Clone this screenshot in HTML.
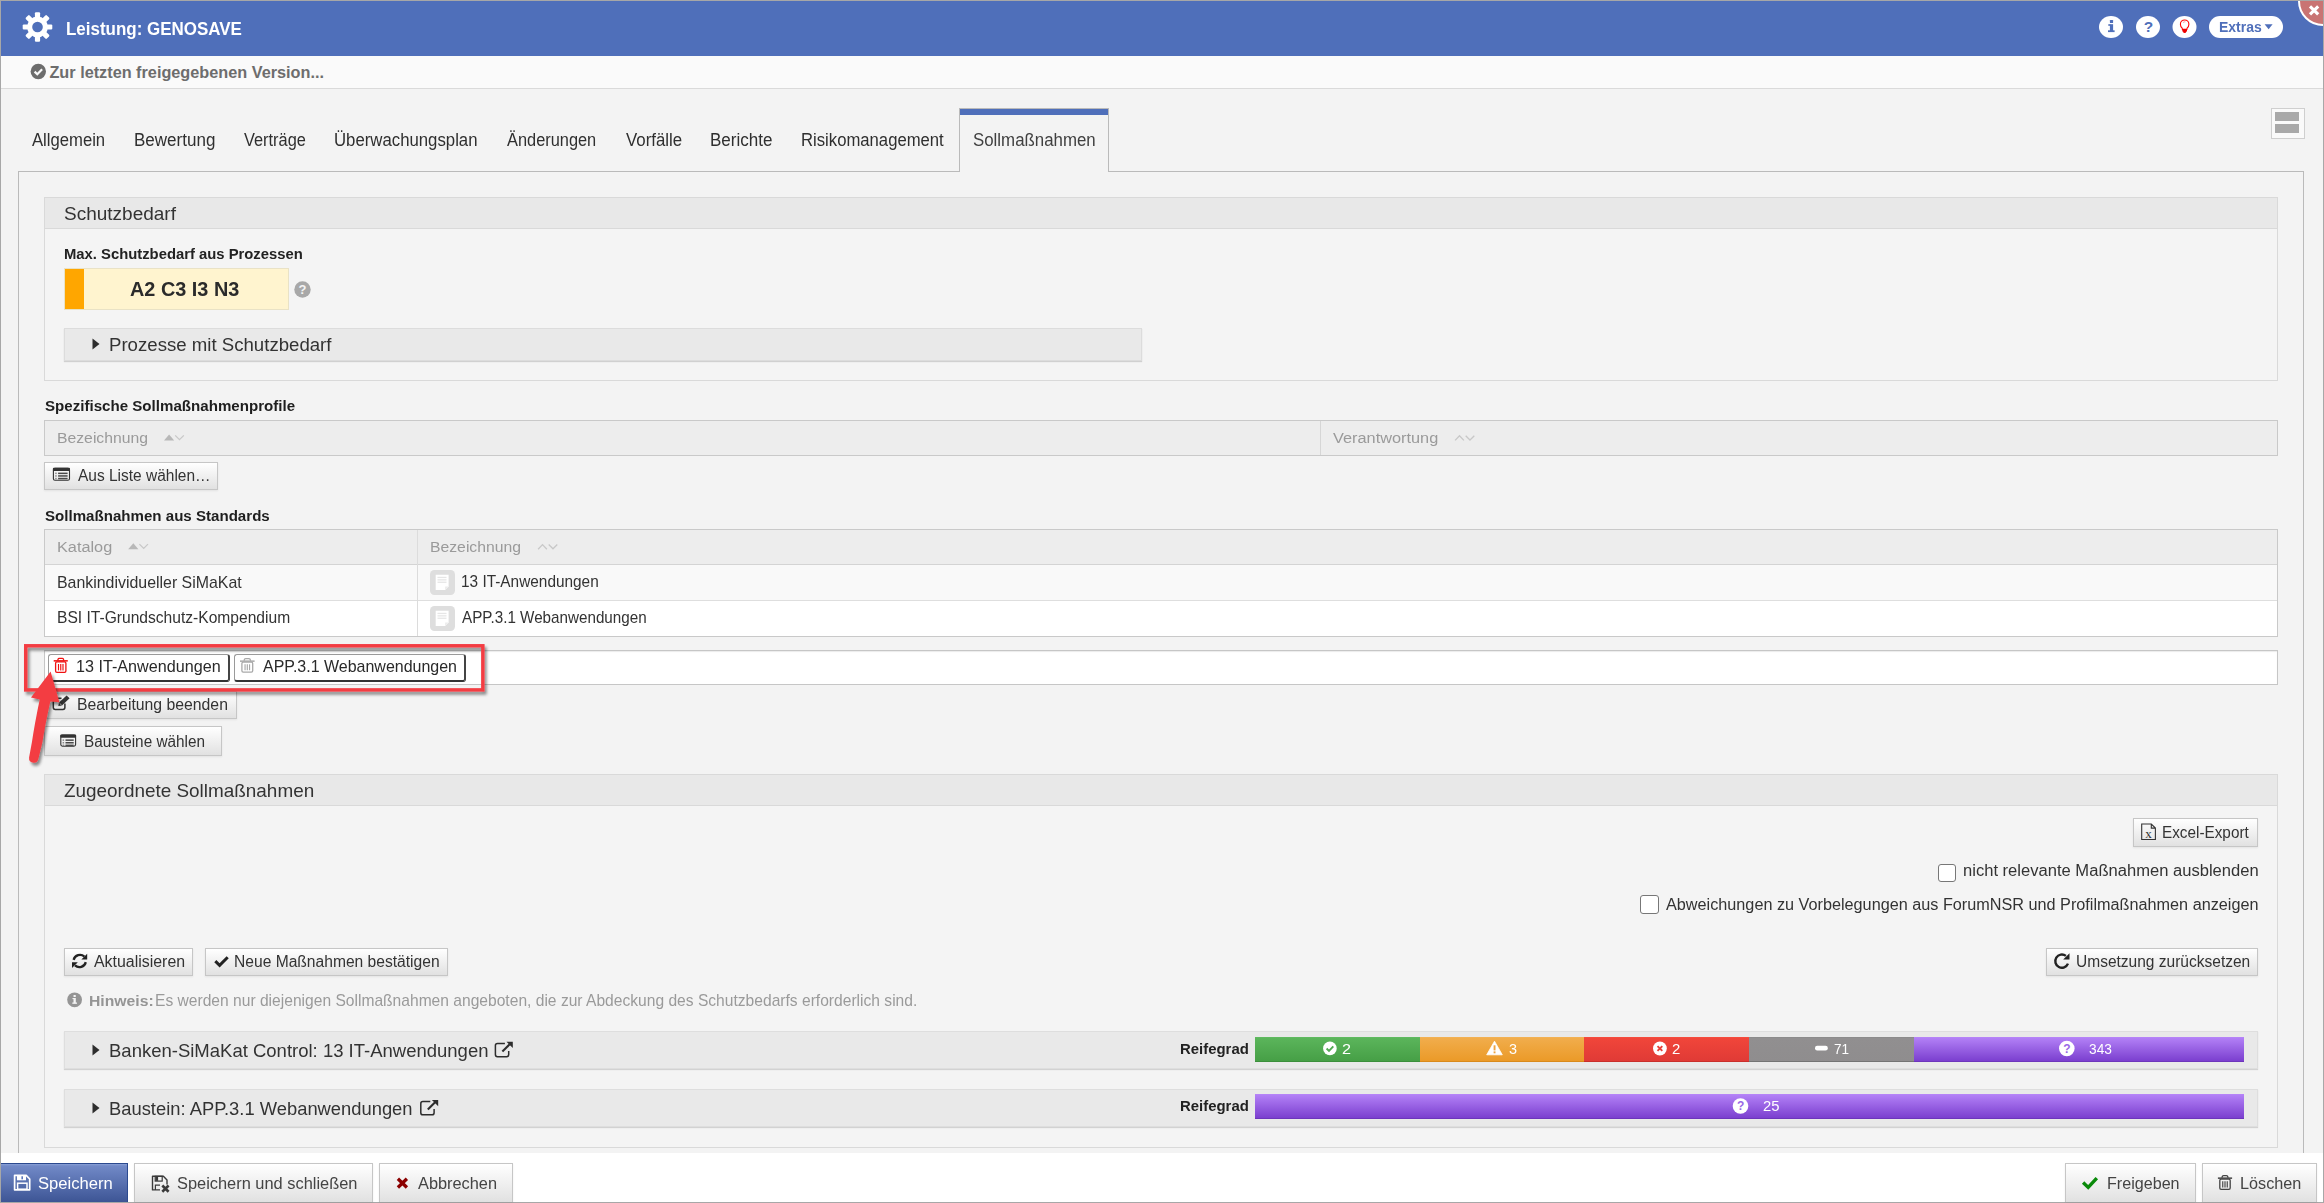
<!DOCTYPE html>
<html><head><meta charset="utf-8"><title>Leistung: GENOSAVE</title>
<style>
html,body{margin:0;padding:0;}
body{width:2324px;height:1203px;overflow:hidden;background:#a7a7a7;font-family:"Liberation Sans", sans-serif;position:relative;}
</style></head><body>
<div style="position:absolute;left:1px;top:1px;width:2322px;height:1201px;background:#f3f3f3;"></div><div style="position:absolute;left:1px;top:1px;width:2322px;height:55px;background:#4f6fba;"></div><div style="position:absolute;left:1px;top:56px;width:2322px;height:32px;background:#fafafa;"></div><div style="position:absolute;left:1px;top:88px;width:2322px;height:1px;background:#dadada;"></div><div style="position:absolute;left:18px;top:171px;width:2286px;height:982px;box-sizing:border-box;border:1px solid #bababa;border-bottom:none;background:#f3f3f3;"></div><div style="position:absolute;left:959px;top:108px;width:150px;height:64px;box-sizing:border-box;border:1px solid #bababa;border-bottom:none;background:#f3f3f3;"></div><div style="position:absolute;left:960px;top:109px;width:148px;height:6px;background:#4f6fba;"></div><div style="position:absolute;left:2271px;top:108px;width:34px;height:31px;box-sizing:border-box;border:1px solid #cfcfcf;background:#fafafa;"></div><div style="position:absolute;left:2275px;top:112px;width:24px;height:9px;background:#a9a9a9;"></div><div style="position:absolute;left:2275px;top:124px;width:24px;height:9px;background:#a9a9a9;"></div><div style="position:absolute;left:1px;top:1153px;width:2322px;height:49px;background:#ffffff;"></div><div style="position:absolute;left:44px;top:197px;width:2234px;height:184px;box-sizing:border-box;border:1px solid #d9d9d9;background:#f4f4f4;"></div><div style="position:absolute;left:45px;top:198px;width:2232px;height:30px;background:#e8e8e8;"></div><div style="position:absolute;left:45px;top:228px;width:2232px;height:1px;background:#d9d9d9;"></div><div style="position:absolute;left:64px;top:268px;width:225px;height:42px;box-sizing:border-box;border:1px solid #e9e2c6;background:#fff4cf;"></div><div style="position:absolute;left:65px;top:269px;width:19px;height:40px;background:#ffa600;"></div><svg style="position:absolute;left:294px;top:281px;" width="17" height="17" viewBox="0 0 17 17"><circle cx="8.5" cy="8.5" r="8.2" fill="#a8a8a8"/><text x="8.5" y="13.4" font-family="Liberation Sans" font-weight="700" font-size="13" fill="#f4f4f4" text-anchor="middle">?</text></svg><div style="position:absolute;left:64px;top:328px;width:1078px;height:33px;box-sizing:border-box;border:1px solid #dcdcdc;background:#e9e9e9;box-shadow:0 1px 1px #d0d0d0;"></div><svg style="position:absolute;left:92px;top:338px;" width="8" height="12" viewBox="0 0 8 12"><path d="M0.5 0.5 L7.5 6 L0.5 11.5 Z" fill="#2d2d2d"/></svg><div style="position:absolute;left:44px;top:420px;width:2234px;height:36px;box-sizing:border-box;border:1px solid #c9c9c9;background:#ededed;"></div><div style="position:absolute;left:1320px;top:421px;width:1px;height:34px;background:#d6d6d6;"></div><div style="position:absolute;left:44px;top:462px;width:174px;height:28px;box-sizing:border-box;border:1px solid #c6c6c6;background:linear-gradient(#ffffff,#e1e1e1);box-shadow:0 1px 2px rgba(0,0,0,0.07);"></div><div style="position:absolute;left:44px;top:529px;width:2234px;height:108px;box-sizing:border-box;border:1px solid #c9c9c9;background:#fff;"></div><div style="position:absolute;left:45px;top:530px;width:2232px;height:34px;background:#ededed;"></div><div style="position:absolute;left:45px;top:564px;width:2232px;height:1px;background:#d4d4d4;"></div><div style="position:absolute;left:45px;top:565px;width:2232px;height:35px;background:#f9f9f9;"></div><div style="position:absolute;left:45px;top:600px;width:2232px;height:1px;background:#dedede;"></div><div style="position:absolute;left:417px;top:530px;width:1px;height:106px;background:#dcdcdc;"></div><div style="position:absolute;left:44px;top:650px;width:2234px;height:35px;box-sizing:border-box;border:1px solid #c6c6c6;background:#fff;box-shadow:inset 0 1px 1px rgba(0,0,0,0.08);"></div><div style="position:absolute;left:48px;top:654px;width:182px;height:28px;box-sizing:border-box;border:1px solid #9a9a9a;border-right:2px solid #444;border-bottom:2px solid #333;border-radius:3px;background:#fff;"></div><div style="position:absolute;left:234px;top:654px;width:232px;height:28px;box-sizing:border-box;border:1px solid #9a9a9a;border-right:2px solid #444;border-bottom:2px solid #333;border-radius:3px;background:#fff;"></div><div style="position:absolute;left:44px;top:691px;width:193px;height:28px;box-sizing:border-box;border:1px solid #c6c6c6;background:linear-gradient(#ffffff,#e1e1e1);box-shadow:0 1px 2px rgba(0,0,0,0.07);"></div><div style="position:absolute;left:44px;top:726px;width:178px;height:30px;box-sizing:border-box;border:1px solid #c6c6c6;background:linear-gradient(#ffffff,#e1e1e1);box-shadow:0 1px 2px rgba(0,0,0,0.07);"></div><div style="position:absolute;left:44px;top:774px;width:2234px;height:374px;box-sizing:border-box;border:1px solid #d9d9d9;background:#f4f4f4;"></div><div style="position:absolute;left:45px;top:775px;width:2232px;height:30px;background:#e8e8e8;"></div><div style="position:absolute;left:45px;top:805px;width:2232px;height:1px;background:#d9d9d9;"></div><div style="position:absolute;left:2133px;top:818px;width:125px;height:29px;box-sizing:border-box;border:1px solid #c6c6c6;background:linear-gradient(#ffffff,#e1e1e1);box-shadow:0 1px 2px rgba(0,0,0,0.07);"></div><div style="position:absolute;left:1938px;top:864px;width:18px;height:18px;box-sizing:border-box;border:1px solid #777;border-radius:3px;background:#fff;"></div><div style="position:absolute;left:1640px;top:895px;width:19px;height:19px;box-sizing:border-box;border:1px solid #777;border-radius:3px;background:#fff;"></div><div style="position:absolute;left:64px;top:948px;width:129px;height:28px;box-sizing:border-box;border:1px solid #c6c6c6;background:linear-gradient(#ffffff,#e1e1e1);box-shadow:0 1px 2px rgba(0,0,0,0.07);"></div><div style="position:absolute;left:205px;top:948px;width:243px;height:28px;box-sizing:border-box;border:1px solid #c6c6c6;background:linear-gradient(#ffffff,#e1e1e1);box-shadow:0 1px 2px rgba(0,0,0,0.07);"></div><div style="position:absolute;left:2046px;top:948px;width:212px;height:28px;box-sizing:border-box;border:1px solid #c6c6c6;background:linear-gradient(#ffffff,#e1e1e1);box-shadow:0 1px 2px rgba(0,0,0,0.07);"></div><div style="position:absolute;left:64px;top:1031px;width:2194px;height:38px;box-sizing:border-box;border:1px solid #dedede;background:#e9e9e9;box-shadow:0 1px 1px #d2d2d2;"></div><div style="position:absolute;left:64px;top:1089px;width:2194px;height:38px;box-sizing:border-box;border:1px solid #dedede;background:#e9e9e9;box-shadow:0 1px 1px #d2d2d2;"></div><svg style="position:absolute;left:92px;top:1044px;" width="8" height="12" viewBox="0 0 8 12"><path d="M0.5 0.5 L7.5 6 L0.5 11.5 Z" fill="#2d2d2d"/></svg><svg style="position:absolute;left:92px;top:1102px;" width="8" height="12" viewBox="0 0 8 12"><path d="M0.5 0.5 L7.5 6 L0.5 11.5 Z" fill="#2d2d2d"/></svg><div style="position:absolute;left:1255px;top:1037px;width:165px;height:25px;background:linear-gradient(#63bd63 0px,#5bb55b 1px,#469f46 24px,#3c8f3c 24px);"></div><div style="position:absolute;left:1420px;top:1037px;width:164px;height:25px;background:linear-gradient(#f3b459 0px,#f1ad4c 1px,#eb9a28 24px,#d98a1c 24px);"></div><div style="position:absolute;left:1584px;top:1037px;width:165px;height:25px;background:linear-gradient(#f8503f 0px,#f1463a 1px,#e03a36 24px,#c92f2c 24px);"></div><div style="position:absolute;left:1749px;top:1037px;width:165px;height:25px;background:linear-gradient(#868686 0px,#918f90 1px,#8f8d8e 24px,#747474 24px);"></div><div style="position:absolute;left:1914px;top:1037px;width:330px;height:25px;background:linear-gradient(#b887f8 0px,#b280f6 1px,#7b3fcf 24px,#6d35bb 24px);"></div><div style="position:absolute;left:1255px;top:1094px;width:989px;height:25px;background:linear-gradient(#b887f8 0px,#b280f6 1px,#7b3fcf 24px,#6d35bb 24px);"></div><div style="position:absolute;left:1px;top:1163px;width:127px;height:39px;box-sizing:border-box;border:1px solid #2c4a8f;border-left:none;border-bottom:none;background:linear-gradient(#8aa0d6 0px,#7189c7 2px,#3d5595 38px);"></div><div style="position:absolute;left:134px;top:1163px;width:239px;height:39px;box-sizing:border-box;border:1px solid #c6c6c6;background:linear-gradient(#ffffff,#e1e1e1);box-shadow:0 1px 2px rgba(0,0,0,0.07);border-bottom:none;"></div><div style="position:absolute;left:379px;top:1163px;width:134px;height:39px;box-sizing:border-box;border:1px solid #c6c6c6;background:linear-gradient(#ffffff,#e1e1e1);box-shadow:0 1px 2px rgba(0,0,0,0.07);border-bottom:none;"></div><div style="position:absolute;left:2065px;top:1163px;width:131px;height:39px;box-sizing:border-box;border:1px solid #c6c6c6;background:linear-gradient(#ffffff,#e1e1e1);box-shadow:0 1px 2px rgba(0,0,0,0.07);border-bottom:none;"></div><div style="position:absolute;left:2202px;top:1163px;width:115px;height:39px;box-sizing:border-box;border:1px solid #c6c6c6;background:linear-gradient(#ffffff,#e1e1e1);box-shadow:0 1px 2px rgba(0,0,0,0.07);border-bottom:none;"></div><svg style="position:absolute;left:0;top:0" width="2324" height="1203" viewBox="0 0 2324 1203"><g transform="translate(37.5,27)" fill="#fff"><circle r="10.4"/><rect x="-2.6" y="-14.8" width="5.2" height="6.5" rx="1.1" transform="rotate(0)"/><rect x="-2.6" y="-14.8" width="5.2" height="6.5" rx="1.1" transform="rotate(45)"/><rect x="-2.6" y="-14.8" width="5.2" height="6.5" rx="1.1" transform="rotate(90)"/><rect x="-2.6" y="-14.8" width="5.2" height="6.5" rx="1.1" transform="rotate(135)"/><rect x="-2.6" y="-14.8" width="5.2" height="6.5" rx="1.1" transform="rotate(180)"/><rect x="-2.6" y="-14.8" width="5.2" height="6.5" rx="1.1" transform="rotate(225)"/><rect x="-2.6" y="-14.8" width="5.2" height="6.5" rx="1.1" transform="rotate(270)"/><rect x="-2.6" y="-14.8" width="5.2" height="6.5" rx="1.1" transform="rotate(315)"/><circle r="5.3" fill="#4f6fba"/></g><circle cx="38.3" cy="71.5" r="7.7" fill="#6d6d6d"/><path d="M34.6 71.6 L37.3 74.3 L42.1 69.3" fill="none" stroke="#fafafa" stroke-width="2.2"/><ellipse cx="2111" cy="27" rx="12" ry="11" fill="#fff"/><ellipse cx="2148" cy="27" rx="12" ry="11" fill="#fff"/><ellipse cx="2184.5" cy="27" rx="12" ry="11" fill="#fff"/><g fill="#4f6fba"><rect x="2109.9" y="20" width="3.2" height="3" rx="0.6"/><rect x="2109.9" y="24.2" width="3.2" height="7.8"/><rect x="2108.3" y="24.2" width="2.2" height="1.6"/><rect x="2108" y="30.3" width="6.6" height="1.8"/></g><text x="2148.4" y="32.4" font-family="Liberation Sans" font-weight="700" font-size="15.5" fill="#4f6fba" text-anchor="middle">?</text><path d="M2182.2 28.2 Q2180.4 26.4 2180.4 24.2 A4.25 4.25 0 1 1 2188.9 24.2 Q2188.9 26.4 2187.1 28.2 L2186.9 29.4 H2182.4 Z" fill="#fff" stroke="#f00" stroke-width="1.1"/><rect x="2182.3" y="29.3" width="4.7" height="2.2" fill="#e00"/><circle cx="2184.65" cy="31.4" r="1.6" fill="#e00"/><path d="M2183 22.6 Q2184 21.6 2185.4 21.8" stroke="#f66" stroke-width="0.7" fill="none"/><rect x="2209" y="16" width="74" height="22" rx="11" fill="#fff"/><path d="M2264.6 24.3 H2272.6 L2268.6 29.2 Z" fill="#4f6fba"/><path d="M164 440.5 L169.1 434.5 L174.2 440.5 Z" fill="#b8b8b8"/><path d="M175.2 435.4 L179.5 439.7 L183.8 435.4" fill="none" stroke="#c8c8c8" stroke-width="1.3"/><path d="M128.2 549.2 L133.29999999999998 543.2 L138.39999999999998 549.2 Z" fill="#b8b8b8"/><path d="M139.39999999999998 544.1 L143.7 548.4000000000001 L148.0 544.1" fill="none" stroke="#c8c8c8" stroke-width="1.3"/><path d="M538.1 549.2 L542.5 544.6 L546.9 549.2" fill="none" stroke="#c8c8c8" stroke-width="1.3"/><path d="M548.7 544.5 L553.0 548.8000000000001 L557.3 544.5" fill="none" stroke="#c8c8c8" stroke-width="1.3"/><path d="M1455.1 440.40000000000003 L1459.5 435.8 L1463.9 440.40000000000003" fill="none" stroke="#c8c8c8" stroke-width="1.3"/><path d="M1465.7 435.7 L1470.0 440.0 L1474.3 435.7" fill="none" stroke="#c8c8c8" stroke-width="1.3"/><rect x="53.4" y="468.2" width="16.1" height="12.1" rx="1.6" fill="none" stroke="#333" stroke-width="1.1"/><rect x="52.9" y="467.7" width="17.1" height="3.2" rx="1" fill="#333"/><rect x="55.199999999999996" y="472.59999999999997" width="1.5" height="1.5" fill="#888"/><rect x="58.1" y="472.59999999999997" width="9.500000000000002" height="1.5" fill="#4a4a4a"/><rect x="55.199999999999996" y="475.2" width="1.5" height="1.5" fill="#888"/><rect x="58.1" y="475.2" width="9.500000000000002" height="1.5" fill="#4a4a4a"/><rect x="55.199999999999996" y="477.79999999999995" width="1.5" height="1.5" fill="#888"/><rect x="58.1" y="477.79999999999995" width="9.500000000000002" height="1.5" fill="#4a4a4a"/><rect x="60.8" y="735.0" width="14.8" height="11.2" rx="1.6" fill="none" stroke="#333" stroke-width="1.1"/><rect x="60.3" y="734.5" width="15.8" height="3.2" rx="1" fill="#333"/><rect x="62.599999999999994" y="739.4" width="1.5" height="1.5" fill="#888"/><rect x="65.5" y="739.4" width="8.200000000000001" height="1.5" fill="#4a4a4a"/><rect x="62.599999999999994" y="742.0" width="1.5" height="1.5" fill="#888"/><rect x="65.5" y="742.0" width="8.200000000000001" height="1.5" fill="#4a4a4a"/><rect x="62.599999999999994" y="744.6" width="1.5" height="1.5" fill="#888"/><rect x="65.5" y="744.6" width="8.200000000000001" height="1.5" fill="#4a4a4a"/><rect x="430" y="570" width="25" height="25" rx="4.5" fill="#dedede"/><path d="M435.7 574.8 H448.6 V586.4 L445.1 589.9 H435.7 Z" fill="#fff"/><path d="M445.1 589.9 V586.4 H448.6 Z" fill="#ececec"/><rect x="437.5" y="576.8" width="9" height="1.3" fill="#e6e6e6"/><rect x="437.5" y="579.1999999999999" width="9" height="1.3" fill="#e6e6e6"/><rect x="437.5" y="581.5999999999999" width="9" height="1.3" fill="#e6e6e6"/><rect x="430" y="606" width="25" height="25" rx="4.5" fill="#dedede"/><path d="M435.7 610.8 H448.6 V622.4 L445.1 625.9 H435.7 Z" fill="#fff"/><path d="M445.1 625.9 V622.4 H448.6 Z" fill="#ececec"/><rect x="437.5" y="612.8" width="9" height="1.3" fill="#e6e6e6"/><rect x="437.5" y="615.1999999999999" width="9" height="1.3" fill="#e6e6e6"/><rect x="437.5" y="617.5999999999999" width="9" height="1.3" fill="#e6e6e6"/><g fill="none" stroke="#f01010" stroke-width="1.3"><rect x="55.6" y="661.9000000000001" width="10.3" height="10.4" rx="1.3"/><path d="M57.6 660.4000000000001 L58.400000000000006 658.6 Q58.7 658.35 59.300000000000004 658.35 H62.199999999999996 Q62.8 658.35 63.099999999999994 658.6 L63.9 660.4000000000001"/></g><rect x="53.7" y="660.1" width="14.1" height="1.5" fill="#f01010"/><line x1="58.5" y1="664.0" x2="58.5" y2="670.4" stroke="#f01010" stroke-width="1.15"/><line x1="60.75" y1="664.0" x2="60.75" y2="670.4" stroke="#f01010" stroke-width="1.15"/><line x1="63.0" y1="664.0" x2="63.0" y2="670.4" stroke="#f01010" stroke-width="1.15"/><g fill="none" stroke="#a9a9a9" stroke-width="1.3"><rect x="241.9" y="662.2" width="10.8" height="9.9" rx="1.3"/><path d="M243.9 660.7 L244.7 658.9 Q245.0 658.65 245.6 658.65 H249.0 Q249.6 658.65 249.9 658.9 L250.7 660.7"/></g><rect x="240" y="660.4" width="14.6" height="1.5" fill="#a9a9a9"/><line x1="245.05" y1="664.3" x2="245.05" y2="670.1999999999999" stroke="#a9a9a9" stroke-width="1.15"/><line x1="247.3" y1="664.3" x2="247.3" y2="670.1999999999999" stroke="#a9a9a9" stroke-width="1.15"/><line x1="249.55" y1="664.3" x2="249.55" y2="670.1999999999999" stroke="#a9a9a9" stroke-width="1.15"/><g fill="none" stroke="#444" stroke-width="1.3"><rect x="2219.8" y="1179.2" width="10.399999999999999" height="10.1" rx="1.3"/><path d="M2221.8 1177.7 L2222.6 1175.9 Q2222.9 1175.65 2223.5 1175.65 H2226.5 Q2227.1 1175.65 2227.4 1175.9 L2228.2 1177.7"/></g><rect x="2217.9" y="1177.4" width="14.2" height="1.5" fill="#444"/><line x1="2222.75" y1="1181.3" x2="2222.75" y2="1187.4" stroke="#444" stroke-width="1.15"/><line x1="2225.0" y1="1181.3" x2="2225.0" y2="1187.4" stroke="#444" stroke-width="1.15"/><line x1="2227.25" y1="1181.3" x2="2227.25" y2="1187.4" stroke="#444" stroke-width="1.15"/><path d="M61.5 698.3 H55.2 Q53.3 698.3 53.3 700.2 V707.6 Q53.3 709.4 55.2 709.4 H63 Q64.9 709.4 64.9 707.6 V703.6" fill="none" stroke="#333" stroke-width="1.5"/><path d="M58.3 705.9 L59 702.6 L66.6 695.4 L69.6 698.3 L62 705.4 Z" fill="#333"/><path d="M59.6 703.3 L61.6 705.1" stroke="#f3f3f3" stroke-width="0.8"/><g fill="none" stroke="#222" stroke-width="2.3"><path d="M73.6 959.9 A6.6 6.6 0 0 1 84.4 956.6"/><path d="M85.8 962.1 A6.6 6.6 0 0 1 75 965.4"/></g><path d="M87.2 953.8 V959.6 H81.4 Z" fill="#222"/><path d="M72 968 V962.2 H77.8 Z" fill="#222"/><path d="M215.3 961.2 L219.6 965.3 L227.7 957.3" fill="none" stroke="#222" stroke-width="3"/><path d="M2068 963.6 A6.6 6.6 0 1 1 2065.9 955.9" fill="none" stroke="#222" stroke-width="2.4"/><path d="M2069.5 953.3 V959.6 H2063.2 Z" fill="#222"/><circle cx="74.6" cy="999.8" r="7.4" fill="#959595"/><g fill="#f4f4f4"><rect x="73.5" y="995" width="2.3" height="2.1" rx="0.5"/><rect x="73.5" y="998" width="2.3" height="5.3"/><rect x="72.3" y="1002.5" width="4.7" height="1.3"/><rect x="72.5" y="998" width="1.6" height="1.1"/></g><path d="M504.9 1043.5 H497.5 Q495.4 1043.5 495.4 1045.6 V1054.6 Q495.4 1056.7 497.5 1056.7 H506.59999999999997 Q508.7 1056.7 508.7 1054.6 V1050.8999999999999" fill="none" stroke="#2d2d2d" stroke-width="1.5"/><path d="M502.4 1051.3999999999999 L509.7 1044.2" stroke="#2d2d2d" stroke-width="2.1"/><path d="M506.5 1041.8 H512.8 V1048.1 Z" fill="#2d2d2d"/><path d="M430.3 1101.6000000000001 H422.90000000000003 Q420.8 1101.6000000000001 420.8 1103.7 V1112.7 Q420.8 1114.8000000000002 422.90000000000003 1114.8000000000002 H432.0 Q434.1 1114.8000000000002 434.1 1112.7 V1109.0" fill="none" stroke="#2d2d2d" stroke-width="1.5"/><path d="M427.8 1109.5 L435.1 1102.3000000000002" stroke="#2d2d2d" stroke-width="2.1"/><path d="M431.90000000000003 1099.9 H438.2 V1106.2 Z" fill="#2d2d2d"/><path d="M2141.7 824 H2151.3 L2155.4 828.1 V839.5 H2141.7 Z M2151.3 824 V828.1 H2155.4" fill="none" stroke="#333" stroke-width="1.1"/><text x="2148.5" y="837.8" font-family="Liberation Serif" font-size="13" fill="#333" text-anchor="middle">x</text><circle cx="1329.9" cy="1048.4" r="6.8" fill="#fff"/><path d="M1326.6 1048.5 L1329 1050.9 L1333.3 1046.3" fill="none" stroke="#52aa52" stroke-width="1.9"/><path d="M1494.5 1041.2 L1502.3 1054.8 H1486.7 Z" fill="#fff" stroke="#fff" stroke-width="0.8" stroke-linejoin="round"/><rect x="1493.6" y="1045.3" width="1.9" height="5.1" fill="#eea340"/><rect x="1493.6" y="1051.4" width="1.9" height="1.9" fill="#eea340"/><circle cx="1659.9" cy="1048.5" r="6.9" fill="#fff"/><path d="M1657.5 1046.1 L1662.3 1050.9 M1662.3 1046.1 L1657.5 1050.9" stroke="#e84038" stroke-width="1.9"/><rect x="1815" y="1045.8" width="12.8" height="4.6" rx="2.2" fill="#fff"/><circle cx="2066.8" cy="1048.5" r="7.8" fill="#fff"/><text x="2066.9" y="1052.8" font-family="Liberation Sans" font-weight="700" font-size="12" fill="#9a68e6" text-anchor="middle">?</text><circle cx="1740.5" cy="1106.0" r="7.8" fill="#fff"/><text x="1740.6" y="1110.3" font-family="Liberation Sans" font-weight="700" font-size="12" fill="#9a68e6" text-anchor="middle">?</text><path d="M14.6 1175.3 H26.2 L29.7 1179 V1189.8 H14.6 Z" fill="none" stroke="#fff" stroke-width="1.7" stroke-linejoin="round"/><rect x="17" y="1175.3" width="9" height="5" fill="#fff"/><rect x="21.4" y="1176.3" width="1.6" height="3" fill="#5a77bd"/><rect x="17.6" y="1183.2" width="9.4" height="6" fill="none" stroke="#fff" stroke-width="1.5"/><path d="M160 1189.9 H152.5 V1176.3 H163.4 L167 1180 V1184.5" fill="none" stroke="#3a3a3a" stroke-width="1.4" stroke-linejoin="round"/><rect x="155.2" y="1176.3" width="7" height="4.8" fill="none" stroke="#3a3a3a" stroke-width="1.2"/><rect x="155.5" y="1176.3" width="2.6" height="4.6" fill="#3a3a3a"/><path d="M155.4 1189.9 V1185.2 H160" fill="none" stroke="#3a3a3a" stroke-width="1.2"/><path d="M162.3 1185.5 L168.6 1191.7 M168.6 1185.5 L162.3 1191.7" stroke="#3a3a3a" stroke-width="2.6"/><path d="M397.9 1178.8 L406.9 1187.5 M406.9 1178.8 L397.9 1187.5" stroke="#8b0000" stroke-width="3.3"/><path d="M2083.1 1182.6 L2088.2 1187.4 L2096.8 1178.2" fill="none" stroke="#0a8a0a" stroke-width="3.4"/></svg><svg style="position:absolute;left:2290px;top:1px" width="33" height="30" viewBox="2290 1 33 30"><circle cx="2323" cy="1" r="24" fill="#c97473" stroke="#fff" stroke-width="2"/><path d="M2310 6.3 L2318.2 14.4 M2318.2 6.3 L2310 14.4" stroke="#fff" stroke-width="3.1"/></svg>
<div style="position:absolute;left:65.94px;top:28.90px;line-height:0;font-size:18.75px;font-weight:700;color:#ffffff;white-space:nowrap;transform-origin:0 0;transform:scaleX(0.9041);">Leistung: GENOSAVE</div><div style="position:absolute;left:49.45px;top:71.70px;line-height:0;font-size:16.25px;font-weight:700;color:#6d6d6d;white-space:nowrap;transform-origin:0 0;transform:scaleX(1.0000);">Zur letzten freigegebenen Version...</div><div style="position:absolute;left:2219.03px;top:27.00px;line-height:0;font-size:14.5px;font-weight:700;color:#4f6fba;white-space:nowrap;transform-origin:0 0;transform:scaleX(0.9640);">Extras</div><div style="position:absolute;left:32.00px;top:139.80px;line-height:0;font-size:17.5px;font-weight:400;color:#2f2f2f;white-space:nowrap;transform-origin:0 0;transform:scaleX(0.9517);">Allgemein</div><div style="position:absolute;left:133.57px;top:139.80px;line-height:0;font-size:17.5px;font-weight:400;color:#2f2f2f;white-space:nowrap;transform-origin:0 0;transform:scaleX(0.9728);">Bewertung</div><div style="position:absolute;left:243.50px;top:139.80px;line-height:0;font-size:17.5px;font-weight:400;color:#2f2f2f;white-space:nowrap;transform-origin:0 0;transform:scaleX(0.9351);">Verträge</div><div style="position:absolute;left:334.05px;top:139.80px;line-height:0;font-size:17.5px;font-weight:400;color:#2f2f2f;white-space:nowrap;transform-origin:0 0;transform:scaleX(0.9578);">Überwachungsplan</div><div style="position:absolute;left:507.10px;top:139.80px;line-height:0;font-size:17.5px;font-weight:400;color:#2f2f2f;white-space:nowrap;transform-origin:0 0;transform:scaleX(0.9356);">Änderungen</div><div style="position:absolute;left:625.50px;top:139.80px;line-height:0;font-size:17.5px;font-weight:400;color:#2f2f2f;white-space:nowrap;transform-origin:0 0;transform:scaleX(0.9625);">Vorfälle</div><div style="position:absolute;left:710.17px;top:139.80px;line-height:0;font-size:17.5px;font-weight:400;color:#2f2f2f;white-space:nowrap;transform-origin:0 0;transform:scaleX(0.9739);">Berichte</div><div style="position:absolute;left:800.70px;top:139.80px;line-height:0;font-size:17.5px;font-weight:400;color:#2f2f2f;white-space:nowrap;transform-origin:0 0;transform:scaleX(0.9530);">Risikomanagement</div><div style="position:absolute;left:972.97px;top:139.80px;line-height:0;font-size:17.5px;font-weight:400;color:#404040;white-space:nowrap;transform-origin:0 0;transform:scaleX(0.9627);">Sollmaßnahmen</div><div style="position:absolute;left:63.91px;top:213.90px;line-height:0;font-size:18.25px;font-weight:400;color:#333;white-space:nowrap;transform-origin:0 0;transform:scaleX(1.0408);">Schutzbedarf</div><div style="position:absolute;left:63.77px;top:254.00px;line-height:0;font-size:15.5px;font-weight:700;color:#222;white-space:nowrap;transform-origin:0 0;transform:scaleX(0.9557);">Max. Schutzbedarf aus Prozessen</div><div style="position:absolute;left:129.79px;top:288.80px;line-height:0;font-size:20.75px;font-weight:700;color:#2b2b2b;white-space:nowrap;transform-origin:0 0;transform:scaleX(0.9573);">A2 C3 I3 N3</div><div style="position:absolute;left:109.15px;top:344.70px;line-height:0;font-size:18.75px;font-weight:400;color:#333;white-space:nowrap;transform-origin:0 0;transform:scaleX(0.9930);">Prozesse mit Schutzbedarf</div><div style="position:absolute;left:44.66px;top:405.70px;line-height:0;font-size:15.25px;font-weight:700;color:#1e1e1e;white-space:nowrap;transform-origin:0 0;transform:scaleX(0.9904);">Spezifische Sollmaßnahmenprofile</div><div style="position:absolute;left:57.37px;top:437.60px;line-height:0;font-size:15.25px;font-weight:400;color:#9a9a9a;white-space:nowrap;transform-origin:0 0;transform:scaleX(1.0321);">Bezeichnung</div><div style="position:absolute;left:1333.20px;top:437.60px;line-height:0;font-size:15.25px;font-weight:400;color:#9a9a9a;white-space:nowrap;transform-origin:0 0;transform:scaleX(1.0699);">Verantwortung</div><div style="position:absolute;left:78.10px;top:476.00px;line-height:0;font-size:16.0px;font-weight:400;color:#333;white-space:nowrap;transform-origin:0 0;transform:scaleX(0.9677);">Aus Liste wählen…</div><div style="position:absolute;left:44.76px;top:515.90px;line-height:0;font-size:15.25px;font-weight:700;color:#1e1e1e;white-space:nowrap;transform-origin:0 0;transform:scaleX(0.9896);">Sollmaßnahmen aus Standards</div><div style="position:absolute;left:57.03px;top:547.00px;line-height:0;font-size:15.25px;font-weight:400;color:#9a9a9a;white-space:nowrap;transform-origin:0 0;transform:scaleX(1.0670);">Katalog</div><div style="position:absolute;left:429.77px;top:546.70px;line-height:0;font-size:15.25px;font-weight:400;color:#9a9a9a;white-space:nowrap;transform-origin:0 0;transform:scaleX(1.0321);">Bezeichnung</div><div style="position:absolute;left:57.06px;top:582.50px;line-height:0;font-size:15.75px;font-weight:400;color:#333;white-space:nowrap;transform-origin:0 0;transform:scaleX(1.0094);">Bankindividueller SiMaKat</div><div style="position:absolute;left:57.08px;top:618.40px;line-height:0;font-size:15.75px;font-weight:400;color:#333;white-space:nowrap;transform-origin:0 0;transform:scaleX(0.9900);">BSI IT-Grundschutz-Kompendium</div><div style="position:absolute;left:461.44px;top:582.00px;line-height:0;font-size:15.75px;font-weight:400;color:#333;white-space:nowrap;transform-origin:0 0;transform:scaleX(0.9769);">13 IT-Anwendungen</div><div style="position:absolute;left:461.70px;top:617.80px;line-height:0;font-size:15.75px;font-weight:400;color:#333;white-space:nowrap;transform-origin:0 0;transform:scaleX(0.9658);">APP.3.1 Webanwendungen</div><div style="position:absolute;left:76.29px;top:666.70px;line-height:0;font-size:17.0px;font-weight:400;color:#2a2a2a;white-space:nowrap;transform-origin:0 0;transform:scaleX(0.9504);">13 IT-Anwendungen</div><div style="position:absolute;left:263.10px;top:666.60px;line-height:0;font-size:17.0px;font-weight:400;color:#2a2a2a;white-space:nowrap;transform-origin:0 0;transform:scaleX(0.9400);">APP.3.1 Webanwendungen</div><div style="position:absolute;left:77.47px;top:704.90px;line-height:0;font-size:16.0px;font-weight:400;color:#333;white-space:nowrap;transform-origin:0 0;transform:scaleX(0.9862);">Bearbeitung beenden</div><div style="position:absolute;left:84.40px;top:741.70px;line-height:0;font-size:16.0px;font-weight:400;color:#333;white-space:nowrap;transform-origin:0 0;transform:scaleX(0.9576);">Bausteine wählen</div><div style="position:absolute;left:64.31px;top:790.90px;line-height:0;font-size:18.5px;font-weight:400;color:#333;white-space:nowrap;transform-origin:0 0;transform:scaleX(1.0221);">Zugeordnete Sollmaßnahmen</div><div style="position:absolute;left:2162.20px;top:833.30px;line-height:0;font-size:16.0px;font-weight:400;color:#333;white-space:nowrap;transform-origin:0 0;transform:scaleX(0.9564);">Excel-Export</div><div style="position:absolute;left:1962.66px;top:871.40px;line-height:0;font-size:16.0px;font-weight:400;color:#333;white-space:nowrap;transform-origin:0 0;transform:scaleX(1.0356);">nicht relevante Maßnahmen ausblenden</div><div style="position:absolute;left:1665.80px;top:904.50px;line-height:0;font-size:16.0px;font-weight:400;color:#333;white-space:nowrap;transform-origin:0 0;transform:scaleX(1.0139);">Abweichungen zu Vorbelegungen aus ForumNSR und Profilmaßnahmen anzeigen</div><div style="position:absolute;left:94.10px;top:962.00px;line-height:0;font-size:16.0px;font-weight:400;color:#333;white-space:nowrap;transform-origin:0 0;transform:scaleX(0.9945);">Aktualisieren</div><div style="position:absolute;left:233.98px;top:962.00px;line-height:0;font-size:16.0px;font-weight:400;color:#333;white-space:nowrap;transform-origin:0 0;transform:scaleX(0.9753);">Neue Maßnahmen bestätigen</div><div style="position:absolute;left:2075.73px;top:962.00px;line-height:0;font-size:16.0px;font-weight:400;color:#333;white-space:nowrap;transform-origin:0 0;transform:scaleX(0.9700);">Umsetzung zurücksetzen</div><div style="position:absolute;left:88.62px;top:1000.90px;line-height:0;font-size:15.5px;font-weight:700;color:#959595;white-space:nowrap;transform-origin:0 0;transform:scaleX(1.0150);">Hinweis:</div><div style="position:absolute;left:155.48px;top:1000.90px;line-height:0;font-size:15.75px;font-weight:400;color:#9a9a9a;white-space:nowrap;transform-origin:0 0;transform:scaleX(0.9905);">Es werden nur diejenigen Sollmaßnahmen angeboten, die zur Abdeckung des Schutzbedarfs erforderlich sind.</div><div style="position:absolute;left:109.15px;top:1050.90px;line-height:0;font-size:18.25px;font-weight:400;color:#333;white-space:nowrap;transform-origin:0 0;transform:scaleX(1.0137);">Banken-SiMaKat Control: 13 IT-Anwendungen</div><div style="position:absolute;left:109.17px;top:1108.80px;line-height:0;font-size:18.25px;font-weight:400;color:#333;white-space:nowrap;transform-origin:0 0;transform:scaleX(1.0061);">Baustein: APP.3.1 Webanwendungen</div><div style="position:absolute;left:1179.77px;top:1048.80px;line-height:0;font-size:15.5px;font-weight:700;color:#222;white-space:nowrap;transform-origin:0 0;transform:scaleX(0.9622);">Reifegrad</div><div style="position:absolute;left:1179.77px;top:1106.30px;line-height:0;font-size:15.5px;font-weight:700;color:#222;white-space:nowrap;transform-origin:0 0;transform:scaleX(0.9622);">Reifegrad</div><div style="position:absolute;left:1342.34px;top:1049.20px;line-height:0;font-size:14.0px;font-weight:400;color:#fff;white-space:nowrap;transform-origin:0 0;transform:scaleX(1.1581);">2</div><div style="position:absolute;left:1508.55px;top:1049.00px;line-height:0;font-size:14.0px;font-weight:400;color:#fff;white-space:nowrap;transform-origin:0 0;transform:scaleX(1.0323);">3</div><div style="position:absolute;left:1672.30px;top:1049.00px;line-height:0;font-size:14.0px;font-weight:400;color:#fff;white-space:nowrap;transform-origin:0 0;transform:scaleX(1.0667);">2</div><div style="position:absolute;left:1833.86px;top:1049.00px;line-height:0;font-size:14.0px;font-weight:400;color:#fff;white-space:nowrap;transform-origin:0 0;transform:scaleX(0.9687);">71</div><div style="position:absolute;left:2089.47px;top:1049.00px;line-height:0;font-size:14.0px;font-weight:400;color:#fff;white-space:nowrap;transform-origin:0 0;transform:scaleX(0.9797);">343</div><div style="position:absolute;left:1762.80px;top:1106.30px;line-height:0;font-size:14.0px;font-weight:400;color:#fff;white-space:nowrap;transform-origin:0 0;transform:scaleX(1.0593);">25</div><div style="position:absolute;left:38.08px;top:1183.50px;line-height:0;font-size:16.75px;font-weight:400;color:#fff;white-space:nowrap;transform-origin:0 0;transform:scaleX(0.9911);">Speichern</div><div style="position:absolute;left:176.79px;top:1183.80px;line-height:0;font-size:16.75px;font-weight:400;color:#444;white-space:nowrap;transform-origin:0 0;transform:scaleX(0.9787);">Speichern und schließen</div><div style="position:absolute;left:418.20px;top:1184.00px;line-height:0;font-size:16.75px;font-weight:400;color:#444;white-space:nowrap;transform-origin:0 0;transform:scaleX(0.9753);">Abbrechen</div><div style="position:absolute;left:2107.34px;top:1183.90px;line-height:0;font-size:16.75px;font-weight:400;color:#444;white-space:nowrap;transform-origin:0 0;transform:scaleX(0.9621);">Freigeben</div><div style="position:absolute;left:2240.23px;top:1183.90px;line-height:0;font-size:16.75px;font-weight:400;color:#444;white-space:nowrap;transform-origin:0 0;transform:scaleX(0.9676);">Löschen</div>
<svg style="position:absolute;left:0;top:0" width="2324" height="1203" viewBox="0 0 2324 1203"><defs><filter id="sh" x="-20%" y="-20%" width="140%" height="140%"><feGaussianBlur in="SourceAlpha" stdDeviation="1.6"/><feOffset dx="2" dy="2.5" result="o"/><feComponentTransfer><feFuncA type="linear" slope="0.45"/></feComponentTransfer><feMerge><feMergeNode/><feMergeNode in="SourceGraphic"/></feMerge></filter></defs><rect x="25.75" y="645.8" width="457.1" height="44.1" fill="none" stroke="#f33d43" stroke-width="3.5" filter="url(#sh)"/><path d="M50.6 671.4 L59.4 702.2 L50.3 701.5 Q45.3 724 42.4 742.3 L38.8 757.2 Q37.8 762.9 33.7 762.7 Q28.6 762.4 29.1 757.6 L31.9 742.3 Q34.6 724 39.7 699.4 L31 697.6 Z" fill="#f33d43" filter="url(#sh)"/></svg>
</body></html>
